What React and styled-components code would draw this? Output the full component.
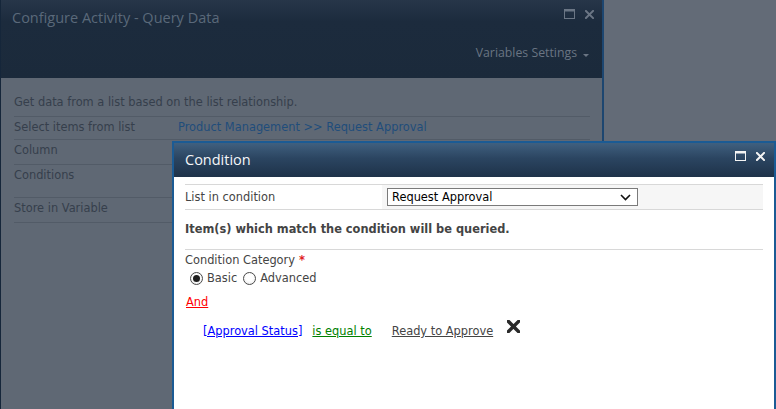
import React from 'react';
import styled, { createGlobalStyle } from 'styled-components';

const GlobalStyle = createGlobalStyle`
    html, body {
        margin: 0;
        padding: 0;
    }
    body {
        background: #636b77;
        font-family: "DejaVu Sans", Verdana, sans-serif;
        overflow: hidden;
    }
`;

const Stage = styled.div`
    position: relative;
    width: 776px;
    height: 409px;
    overflow: hidden;
    background: #636b77;
`;

const OuterDialog = styled.div`
    box-sizing: border-box;
    width: 604px;
    height: 409px;
    display: flex;
    flex-direction: column;
    background: #5f6874;
    border-left: 1px solid #15263a;
    border-right: 2px solid #1d4670;
`;

const OuterHeader = styled.div`
    height: 78px;
    box-sizing: border-box;
    display: flex;
    flex-direction: column;
    padding: 0 8px 0 11px;
    background: linear-gradient(#273649 0px, #1c2b3d 22px, #1b2a3b 100%);
`;

const TitleRow = styled.div`
    height: 36px;
    display: flex;
    align-items: center;
    justify-content: space-between;
`;

const OuterTitle = styled.div`
    font-family: "Open Sans", "Noto Sans", sans-serif;
    font-size: 14.5px;
    color: #5a697a;
    margin-top: -1px;
`;

const WindowButtons = styled.div`
    display: flex;
    align-items: center;
    gap: 10px;
    margin-top: -8px;
`;

const RibbonRow = styled.div`
    display: flex;
    justify-content: flex-end;
    align-items: center;
    gap: 6px;
    margin-top: 8px;
    padding-right: 5px;
    font-family: "Open Sans", "Noto Sans", sans-serif;
    font-size: 12.3px;
    color: #6a7583;
`;

const DropArrow = styled.span`
    width: 0;
    height: 0;
    margin-top: 5px;
    border-left: 3px solid transparent;
    border-right: 3px solid transparent;
    border-top: 3px solid #6a7583;
`;

const OuterBody = styled.div`
    padding: 17px 12px 0 13px;
    font-size: 11.4px;
    line-height: 14px;
    color: #363f4c;
`;

const Intro = styled.div`
    padding-bottom: 7px;
    border-bottom: 1px solid #525b67;
`;

const FieldRow = styled.div`
    box-sizing: border-box;
    height: ${(p) => p.$h}px;
    display: flex;
    padding-top: 3px;
    border-bottom: 1px solid #525b67;
`;

const FieldLabel = styled.div`
    width: 164px;
`;

const FieldLink = styled.span`
    color: #1f4d7b;
`;

const ConditionDialog = styled.div`
    position: absolute;
    left: 172px;
    top: 141px;
    width: 604px;
    height: 270px;
    box-sizing: border-box;
    display: flex;
    flex-direction: column;
    border: 2px solid #1b5b94;
    border-bottom: none;
    background: #ffffff;
`;

const DialogTitleBar = styled.div`
    height: 34px;
    flex-shrink: 0;
    box-sizing: border-box;
    display: flex;
    align-items: center;
    justify-content: space-between;
    padding: 0 9px 0 11px;
    background: linear-gradient(#40607f 0%, #2b4561 45%, #1e3249 100%);
`;

const DialogTitle = styled.div`
    font-family: "Open Sans", "Noto Sans", sans-serif;
    font-size: 14.5px;
    color: #f4f6f8;
    margin-top: -1px;
`;

const DialogBody = styled.div`
    padding: 7px 11px 0 11px;
    font-size: 11.4px;
    line-height: 14px;
    color: #444444;
`;

const ListTable = styled.div`
    display: flex;
    height: 26px;
    box-sizing: border-box;
    border-top: 1px solid #d8d8d8;
    border-bottom: 1px solid #d8d8d8;
`;

const ListLabel = styled.div`
    width: 197px;
    display: flex;
    align-items: center;
`;

const ListValue = styled.div`
    flex: 1;
    display: flex;
    align-items: center;
    padding-left: 5px;
    background: #f6f6f6;
`;

const SelectBox = styled.div`
    box-sizing: border-box;
    width: 251px;
    height: 18px;
    display: flex;
    align-items: center;
    justify-content: space-between;
    padding: 0 6px 0 4px;
    border: 1px solid #7a7a7a;
    background: #ffffff;
    color: #000000;
`;

const Note = styled.div`
    font-weight: bold;
    color: #444444;
    padding: 12px 0 13px;
    border-bottom: 1px solid #d8d8d8;
`;

const CategoryLabel = styled.div`
    margin-top: 3px;
`;

const Required = styled.span`
    color: #e02020;
    font-weight: bold;
    margin-left: 4px;
`;

const RadioGroup = styled.div`
    display: flex;
    align-items: center;
    margin-top: 4px;
    padding-left: 5px;
`;

const RadioItem = styled.label`
    display: flex;
    align-items: center;
    gap: 4px;
    margin-right: 6px;
`;

const RadioCircle = styled.span`
    box-sizing: border-box;
    width: 13px;
    height: 13px;
    border-radius: 50%;
    border: 1px solid #4a4a4a;
    background: radial-gradient(circle at 50% 40%, #ffffff 40%, #e4e4e4 100%);
    display: flex;
    align-items: center;
    justify-content: center;

    &::after {
        content: '';
        width: 7px;
        height: 7px;
        border-radius: 50%;
        background: ${(p) => (p.$checked ? '#1e1e1e' : 'transparent')};
    }
`;

const AndLink = styled.a`
    display: inline-block;
    margin-top: 10px;
    padding-left: 1px;
    color: #ff0000;
    text-decoration: underline;
`;

const ConditionRow = styled.div`
    display: flex;
    align-items: center;
    margin-top: 15px;
    padding-left: 18px;
`;

const Token = styled.a`
    color: ${(p) => p.$color};
    text-decoration: underline;
    margin-right: ${(p) => p.$gap}px;
`;

const DeleteButton = styled.span`
    display: flex;
    margin-top: -10px;
`;

const MaximizeIcon = ({ color }) => (
    <svg width="11" height="10" viewBox="0 0 11 10">
        <rect x="0.5" y="0.5" width="10" height="9" fill="none" stroke={color} strokeWidth="1" />
        <rect x="0" y="0" width="11" height="2.5" fill={color} />
    </svg>
);

const CloseIcon = ({ color, size = 9, weight = 2.2 }) => (
    <svg width={size} height={size} viewBox="0 0 10 10">
        <path d="M1 1 L9 9 M9 1 L1 9" stroke={color} strokeWidth={weight} strokeLinecap="square" />
    </svg>
);

const Chevron = () => (
    <svg width="11" height="7" viewBox="0 0 11 7">
        <path d="M1 1 L5.5 5.5 L10 1" fill="none" stroke="#111" strokeWidth="1.6" />
    </svg>
);

const outerRows = [
    { label: 'Select items from list', value: 'Product Management >> Request Approval', h: 23 },
    { label: 'Column', h: 25 },
    { label: 'Conditions', h: 33 },
    { label: 'Store in Variable', h: 25 },
];

const App = () => (
    <Stage>
        <GlobalStyle />
        <OuterDialog>
            <OuterHeader>
                <TitleRow>
                    <OuterTitle>Configure Activity - Query Data</OuterTitle>
                    <WindowButtons>
                        <MaximizeIcon color="#6b7685" />
                        <CloseIcon color="#6b7685" />
                    </WindowButtons>
                </TitleRow>
                <RibbonRow>
                    Variables Settings
                    <DropArrow />
                </RibbonRow>
            </OuterHeader>
            <OuterBody>
                <Intro>Get data from a list based on the list relationship.</Intro>
                {outerRows.map((row) => (
                    <FieldRow key={row.label} $h={row.h}>
                        <FieldLabel>{row.label}</FieldLabel>
                        {row.value && <FieldLink>{row.value}</FieldLink>}
                    </FieldRow>
                ))}
            </OuterBody>
        </OuterDialog>

        <ConditionDialog>
            <DialogTitleBar>
                <DialogTitle>Condition</DialogTitle>
                <WindowButtons>
                    <MaximizeIcon color="#f4f4f4" />
                    <CloseIcon color="#f4f4f4" />
                </WindowButtons>
            </DialogTitleBar>
            <DialogBody>
                <ListTable>
                    <ListLabel>List in condition</ListLabel>
                    <ListValue>
                        <SelectBox>
                            <span>Request Approval</span>
                            <Chevron />
                        </SelectBox>
                    </ListValue>
                </ListTable>
                <Note>Item(s) which match the condition will be queried.</Note>
                <CategoryLabel>
                    Condition Category<Required>*</Required>
                </CategoryLabel>
                <RadioGroup>
                    <RadioItem>
                        <RadioCircle $checked />
                        Basic
                    </RadioItem>
                    <RadioItem>
                        <RadioCircle />
                        Advanced
                    </RadioItem>
                </RadioGroup>
                <AndLink>And</AndLink>
                <ConditionRow>
                    <Token $color="#0000ff" $gap={10}>[Approval Status]</Token>
                    <Token $color="#008000" $gap={20}>is equal to</Token>
                    <Token $color="#444444" $gap={14}>Ready to Approve</Token>
                    <DeleteButton>
                        <CloseIcon color="#2a2a2a" size={13} weight={2.6} />
                    </DeleteButton>
                </ConditionRow>
            </DialogBody>
        </ConditionDialog>
    </Stage>
);

export default App;
